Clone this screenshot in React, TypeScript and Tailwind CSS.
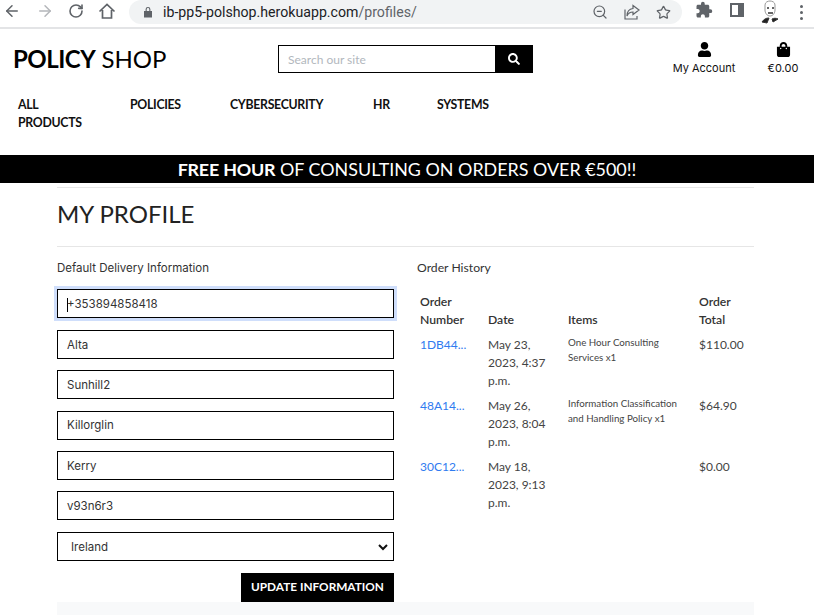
import { ArrowLeft, ArrowRight, RotateCw, ZoomOut, Star } from 'lucide-react';
import { FaSearch, FaShoppingBag, FaUser } from 'react-icons/fa';
import { MdExtension } from 'react-icons/md';

const orders = [
  { id: '1DB44...', date: 'May 23, 2023, 4:37 p.m.', items: 'One Hour Consulting Services x1', total: '$110.00' },
  { id: '48A14...', date: 'May 26, 2023, 8:04 p.m.', items: 'Information Classification and Handling Policy x1', total: '$64.90' },
  { id: '30C12...', date: 'May 18, 2023, 9:13 p.m.', items: '', total: '$0.00' },
];

const fields = ['Alta', 'Sunhill2', 'Killorglin', 'Kerry', 'v93n6r3'];

function BrowserBar() {
  return (
    <div className="flex h-[29px] items-start border-b-2 border-[#e3e4e6] bg-white text-[#5f6368]">
      <ArrowLeft size={18} strokeWidth={2} className="ml-[3px] mt-[2px] shrink-0" />
      <ArrowRight size={18} strokeWidth={2} className="ml-[15px] mt-[2px] shrink-0 text-[#b4b6ba]" />
      <RotateCw size={16} strokeWidth={2.4} className="ml-[14px] mt-[3px] shrink-0" />
      <svg width="18" height="18" viewBox="0 0 18 18" fill="none" stroke="currentColor" strokeWidth="1.7" className="ml-[14px] mt-[2px] shrink-0">
        <path d="M1.5 9.5 9 2.5l7.5 7M4.5 8v8h9V8" />
      </svg>
      <div className="ml-[13px] flex h-[24px] w-[553px] shrink-0 items-center rounded-r-full rounded-l-full bg-[#f1f3f4] pl-[14px] pr-[11px]">
        <svg width="10" height="12" viewBox="0 0 10 12" fill="currentColor" className="shrink-0">
          <path d="M1 5h8v6.5H1zM2.6 5V3.3a2.4 2.4 0 0 1 4.8 0V5H6.3V3.3a1.3 1.3 0 0 0-2.6 0V5z" />
        </svg>
        <span className="ml-[10px] font-['Roboto',sans-serif] text-[14.15px] leading-none text-[#202124]">
          ib-pp5-polshop.herokuapp.com<span className="text-[#5f6368]">/profiles/</span>
        </span>
        <ZoomOut size={16} strokeWidth={1.8} className="ml-auto shrink-0" />
        <svg width="16" height="16" viewBox="0 0 16 16" fill="none" stroke="currentColor" strokeWidth="1.2" className="ml-[16px] shrink-0">
          <path d="M9 1.5 15 6l-6 4.5V8C5.5 8 4 9.5 3 12c0-4.5 2-7 6-7.5zM1 5.5V15h12v-3" />
        </svg>
        <Star size={15} strokeWidth={2} className="ml-[16px] shrink-0" />
      </div>
      <MdExtension size={18} className="ml-[13px] mt-[1px] shrink-0" />
      <svg width="14" height="14" viewBox="0 0 14 14" className="ml-[17px] mt-[3px] shrink-0">
        <path fill="#5f6368" d="M0 0h14v14H0z" />
        <path fill="#fff" d="M2 2h6v10H2z" />
      </svg>
      <svg width="20" height="24" viewBox="0 0 20 24" fill="none" stroke="#333" strokeWidth="1" className="ml-[16px] shrink-0">
        <path d="M5 5c0-3 3-4 5-4s5 1 5 4v5c0 3-2 6-5 6s-5-3-5-6z" stroke="#999" />
        <path d="M7 8h2M12 8h2M8 13h5" strokeWidth="1.5" />
        <path d="M2 22c2-3 4-4 7-4l-2 5zM18 19c-2-1-4-1-6 0l1 3z" fill="#222" />
      </svg>
      <div className="ml-[20px] mt-[5px] flex shrink-0 flex-col gap-[3px]">
        <span className="h-[3px] w-[3px] rounded-full bg-[#5f6368]" />
        <span className="h-[3px] w-[3px] rounded-full bg-[#5f6368]" />
        <span className="h-[3px] w-[3px] rounded-full bg-[#5f6368]" />
      </div>
    </div>
  );
}

function SiteHeader() {
  return (
    <header className="bg-white">
      <div className="flex h-[64px] items-start pl-[13px]">
        <div className="mt-[14px] w-[265px] shrink-0 text-[24px] leading-[32px] text-black">
          <span className="font-bold tracking-[-0.5px]">POLICY</span> SHOP
        </div>
        <div className="mt-[16px] flex h-[28px] w-[255px] shrink-0 border border-black">
          <div className="flex-1 pl-[9px] text-[12px] leading-[27px] text-[#b2b7bd]">Search our site</div>
          <div className="flex w-[37px] items-center justify-center bg-black text-white">
            <FaSearch size={12} />
          </div>
        </div>
        <div className="ml-[139px] mt-[13px] flex w-[64px] shrink-0 flex-col items-center">
          <FaUser size={15} className="text-black" />
          <span className="mt-[3px] whitespace-nowrap font-['Inter',sans-serif] text-[11px] leading-[17px] text-[#111]">My Account</span>
        </div>
        <div className="ml-[31px] mt-[13px] flex w-[32px] shrink-0 flex-col items-center">
          <FaShoppingBag size={15} className="text-black" />
          <span className="mt-[3px] font-['Inter',sans-serif] text-[11px] leading-[17px] text-[#111]">€0.00</span>
        </div>
      </div>
      <nav className="grid h-[62px] grid-cols-[112px_100px_143px_64px_auto] items-start pl-[18px] pt-[3px] text-[12.3px] font-bold leading-[18px] tracking-[-0.3px] text-[#111]">
        <span className="w-[66px]">ALL PRODUCTS</span>
        <span>POLICIES</span>
        <span>CYBERSECURITY</span>
        <span>HR</span>
        <span>SYSTEMS</span>
      </nav>
      <div className="h-[28px] bg-black text-center text-[17.9px] leading-[28px] text-white">
        <span className="font-bold tracking-[-0.2px]">FREE HOUR</span> OF CONSULTING ON ORDERS OVER €500!!
      </div>
    </header>
  );
}

function FormInput({ children }: { children: React.ReactNode }) {
  return (
    <div className="flex h-[29px] items-center border border-black pl-[9px] pt-[2px] font-['Inter',sans-serif] text-[11.5px] text-[#333]">
      {children}
    </div>
  );
}

export default function App() {
  return (
    <div className="h-[615px] w-[814px] overflow-hidden bg-white font-['Lato',sans-serif]">
      <BrowserBar />
      <SiteHeader />
      <main className="ml-[57px] mr-[60px] mt-[4px]">
        <div className="border-y border-[#e6e6e6] pb-[16px] pt-[10px] text-[24px] leading-[32px] text-[#222]">MY PROFILE</div>
        <div className="mt-[13px] flex">
          <section className="w-[337px]">
            <p className="font-['Inter',sans-serif] text-[11.5px] leading-[17px] text-[#333]">Default Delivery Information</p>
            <div className="mt-[12.4px] flex flex-col gap-[11.4px]">
              <div className="flex h-[29px] items-center border border-black pl-[9px] pt-[2px] font-['Inter',sans-serif] text-[11.5px] text-[#333] outline-[3px] outline-[#cfdefb]">
                <span className="-mr-px h-[14px] w-px bg-black" />+353894858418
              </div>
              {fields.map(value => (
                <FormInput key={value}>{value}</FormInput>
              ))}
              <div className="flex h-[29px] items-center justify-between border border-black pl-[13px] pr-[5px] pt-[2px] font-['Inter',sans-serif] text-[11.5px] text-[#333]">
                Ireland
                <svg width="10" height="7" viewBox="0 0 10 7" fill="none" stroke="#111" strokeWidth="2">
                  <path d="m1 1 4 4 4-4" />
                </svg>
              </div>
            </div>
            <div className="mt-[12px] flex justify-end">
              <div className="flex h-[29px] w-[153px] items-center justify-center bg-black text-[11.8px] font-bold text-white">UPDATE INFORMATION</div>
            </div>
          </section>
          <section className="ml-[23px] w-[337px]">
            <p className="text-[12.2px] leading-[15px] text-[#333]">Order History</p>
            <table className="mt-[18px] w-full table-fixed border-collapse text-[12px] leading-[18px] text-[#444]">
              <thead>
                <tr className="align-bottom text-[12.2px] text-[#333]">
                  <th className="w-[68px] px-[3px] pb-[4px] text-left font-semibold">Order Number</th>
                  <th className="w-[80px] px-[3px] pb-[4px] text-left font-semibold">Date</th>
                  <th className="w-[131px] px-[3px] pb-[4px] text-left font-semibold">Items</th>
                  <th className="px-[3px] pb-[4px] text-left font-semibold">Order Total</th>
                </tr>
              </thead>
              <tbody>
                {orders.map(order => (
                  <tr key={order.id} className="align-top">
                    <td className="px-[3px] pb-[4px] pt-[3px] text-[#2f7bf0]">{order.id}</td>
                    <td className="px-[3px] pb-[4px] pt-[3px]">{order.date}</td>
                    <td className="px-[3px] pb-[4px] pt-[2px] text-[9.75px] leading-[15px]">{order.items}</td>
                    <td className="px-[3px] pb-[4px] pt-[3px]">{order.total}</td>
                  </tr>
                ))}
              </tbody>
            </table>
          </section>
        </div>
        <div className="h-[20px] bg-[#f8f9fa]" />
      </main>
    </div>
  );
}
